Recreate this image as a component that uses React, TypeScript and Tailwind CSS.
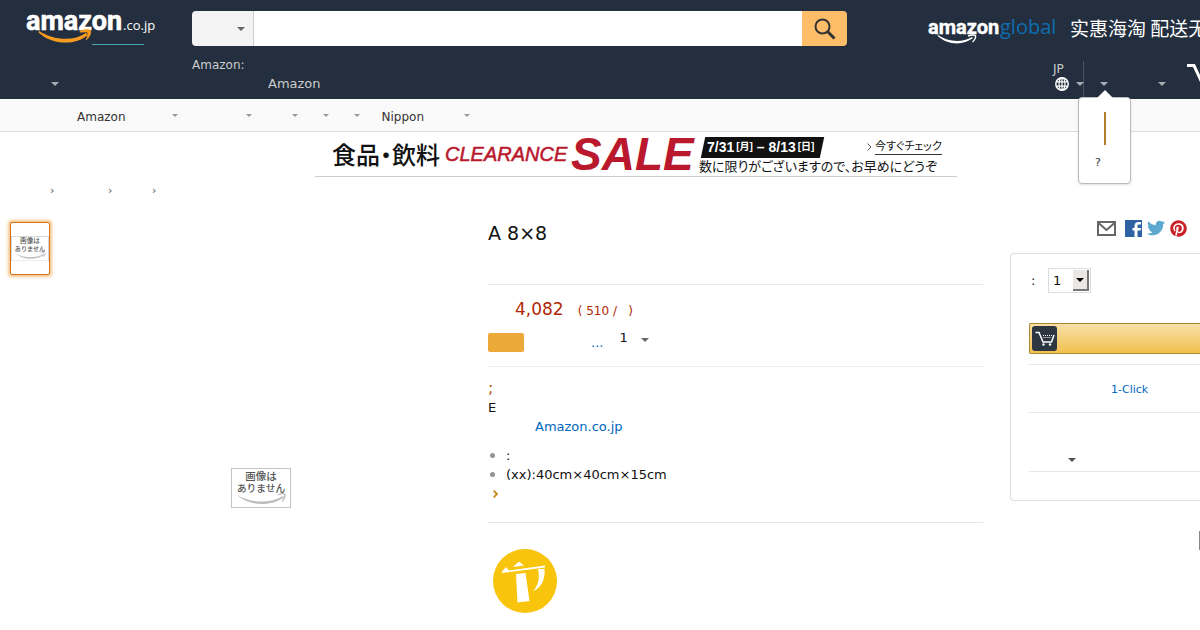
import { FaPinterest, FaTwitter } from 'react-icons/fa';
import { clsx } from 'clsx';

const Caret = ({ className, small }: { className?: string; small?: boolean }) => (
  <span
    className={clsx(
      'block h-0 w-0 shrink-0 border-x-transparent',
      small ? '-mt-[2px] border-x-3 border-t-3 border-t-[#999]' : 'border-x-4 border-t-4',
      className,
    )}
  />
);

const Logo = () => (
  <svg width="134" height="36" viewBox="0 0 134 36" role="img" aria-label="amazon.co.jp">
    <text x="0" y="20" fontSize="27" fontWeight="700" fill="#fff" stroke="#fff" strokeWidth="0.600" fontFamily="Roboto, sans-serif">
      amazon
    </text>
    <text x="97" y="20" fontSize="13" fill="#fff" fontFamily="'Open Sans', sans-serif">
      .co.jp
    </text>
    <path d="M13 21C27 30 47 32 60 23l2 2C49 36 26 35 12.500 22.500z" fill="#f79b20" />
    <path d="M54 21c4-1.700 9-2 10.500-.5 1 2-.8 7-4.300 9.500 1-3 2.300-6 1.500-7.300-1-.9-4.600-.7-7.500-.4z" fill="#f79b20" stroke="#f79b20" strokeWidth="0.600" />
    <path d="M66 34.500h52" stroke="#4aa3b5" />
  </svg>
);

const GlobalLogo = () => (
  <svg width="134" height="32" viewBox="0 0 134 32" className="shrink-0" role="img" aria-label="amazonglobal">
    <text x="0" y="22" fontSize="20" fontWeight="700" fill="#fff" stroke="#fff" strokeWidth="0.400" fontFamily="Roboto, sans-serif">
      amazon
    </text>
    <text x="72" y="22" fontSize="20" fill="#0e6db0" fontFamily="'Open Sans', sans-serif">
      global
    </text>
    <path d="M10 23c10 7 24 8 34 2l1 1C35 34 19 33 9.500 23.700z" fill="#fff" />
    <path d="M40 24c3-1 6-1.200 7.500-.5.5 2-.8 4.500-3 6.500" fill="none" stroke="#fff" strokeWidth="1.400" />
  </svg>
);

const GlobeIcon = () => (
  <svg width="14" height="14" viewBox="0 0 14 14" fill="none" stroke="#fff" strokeWidth="1.200">
    <circle cx="7" cy="7" r="6.200" strokeWidth="1.500" />
    <ellipse cx="7" cy="7" rx="3" ry="6.200" />
    <path d="M7 1v12M1.500 4.800h11M1.500 9.200h11" />
  </svg>
);

const NoImage = ({ className }: { className?: string }) => (
  <svg viewBox="0 0 60 40" className={className} role="img" aria-label="画像はありません">
    <rect x="0.5" y="0.5" width="59" height="39" fill="#fff" stroke="#c4c4c4" />
    <g fontWeight="500" fill="#555" textAnchor="middle" fontFamily="'Noto Sans CJK JP', sans-serif">
      <text x="30" y="11.500" fontSize="10.500">画像は</text>
      <text x="30" y="23.500" fontSize="9.700">ありません</text>
    </g>
    <path d="M6 27c13 8 33 9 46 1l1 1.500C39 39 18 38 6 27z" fill="#bbb" />
    <path d="M47 27c3-1.500 6-1.500 7-.7.3 2.500-1 5-3 7" fill="none" stroke="#bbb" strokeWidth="1.200" />
  </svg>
);

const Header = () => (
  <header className="h-[99px] bg-[#232f3e] text-[#ccc]">
    <div className="flex h-[57px] items-start">
      <a href="#" className="w-[192px] shrink-0 pl-[26px] pt-[10px]">
        <Logo />
      </a>
      <form className="mt-[11px] flex h-[35px] min-w-0 flex-1 overflow-hidden rounded">
        <div className="relative w-[62px] shrink-0 border-r border-[#cdcdcd] bg-[#f3f3f3]">
          <select aria-label="カテゴリー" className="h-full w-full appearance-none bg-transparent">
            <option></option>
          </select>
          <Caret className="pointer-events-none absolute right-2 top-4 border-t-[#666]" />
        </div>
        <input aria-label="検索" type="text" className="min-w-0 flex-1 bg-white px-2 text-[#111] outline-none" />
        <button type="button" aria-label="検索する" className="flex w-[45px] items-center justify-center bg-[#febd69]">
          <svg width="22" height="22" viewBox="0 0 22 22" fill="none" stroke="#333">
            <circle cx="8.500" cy="8.500" r="7" strokeWidth="2" />
            <path d="M13.500 13.500l7 7" strokeWidth="3" />
          </svg>
        </button>
      </form>
      <a href="#" className="flex w-[353px] shrink-0 items-center overflow-hidden pl-[81px] pt-3">
        <GlobalLogo />
        <span className="ml-2 whitespace-nowrap font-['Noto_Sans_CJK_SC',sans-serif] text-[19px] leading-7 text-white">
          实惠海淘 配送无
        </span>
      </a>
    </div>
    <div className="flex h-[42px]">
      <div className="w-[192px] shrink-0 pl-[51px] pt-[25px]">
        <Caret className="border-t-[#a7acb2]" />
      </div>
      <div className="flex-1">
        <p className="text-xs">Amazon:</p>
        <a href="#" className="ml-[76px] mt-px block text-[13px] leading-5">
          Amazon
        </a>
      </div>
      <div className="flex w-[353px] shrink-0 pl-[206px] pt-1">
        <a href="#" className="flex w-[31px] shrink-0 flex-col border-r border-[#4a5563] text-xs">
          JP
          <span className="flex items-center justify-between">
            <span className="ml-[2px]">
              <GlobeIcon />
            </span>
            <Caret className="-mr-px border-t-[#a7acb2]" />
          </span>
        </a>
        <div className="relative w-[42px] shrink-0 pl-4 pt-[21px]">
          <Caret className="border-t-[#a7acb2]" />
          <div className="absolute left-[-6px] top-9 z-10 h-[87px] w-[53px] rounded-sm border border-[#bbb] bg-white shadow-sm">
            <span className="absolute -top-2 left-[18px] border-x-8 border-b-8 border-x-transparent border-b-white" />
            <button type="button" aria-label="ログイン" className="mx-auto mt-[14px] block h-[33px] w-[2px] bg-[#b0812a]" />
            <p className="ml-4 mt-[10px] text-[11px] leading-4 text-[#333]">?</p>
          </div>
        </div>
        <Caret className="ml-[32px] mt-[21px] border-t-[#a7acb2]" />
        <svg width="40" height="30" viewBox="0 0 40 30" className="ml-[21px] mt-[2px] shrink-0" fill="none" stroke="#fff" strokeWidth="3">
          <path d="M0 2.500h7L16 22h18" />
        </svg>
      </div>
    </div>
  </header>
);

const Nav = () => (
  <nav className="flex h-[33px] items-center overflow-hidden border-b border-[#ddd] bg-[#fafafa] pl-[77px] pt-[3px] text-xs text-[#333]">
    <a href="#">Amazon</a>
    <Caret small className="ml-[46px]" />
    <Caret small className="ml-[68px]" />
    <Caret small className="ml-[40px]" />
    <Caret small className="ml-[25px]" />
    <Caret small className="ml-[25px]" />
    <a href="#" className="ml-[22px]">
      Nippon
    </a>
    <Caret small className="ml-[40px]" />
  </nav>
);

const SaleBanner = () => (
  <a
    href="#"
    className="ml-[315px] flex h-[45px] w-[642px] items-center whitespace-nowrap border-b border-[#ccc] pl-[17px] font-['Liberation_Sans','Noto_Sans_CJK_JP',sans-serif] text-[#111]"
  >
    <span className="w-[113px] font-['Noto_Sans_CJK_JP',sans-serif] text-2xl font-medium [font-feature-settings:'palt']">
      食品・飲料
    </span>
    <span className="w-[126px] text-xl italic text-[#b9182d] [-webkit-text-stroke:0.5px_#b9182d]">CLEARANCE</span>
    <span className="w-[128px] text-[46px] font-bold italic leading-[45px] text-[#b9182d]">SALE</span>
    <span className="flex flex-1 flex-col pt-1">
      <span className="flex items-center">
        <span className="relative z-0 ml-1 flex h-[21px] w-[119px] items-center whitespace-pre pl-1 text-sm font-bold text-white before:absolute before:inset-0 before:-z-10 before:-skew-x-12 before:bg-[#111]">
          7/31<span className="ml-[2px] text-[10px]">[月]</span> – 8/13<span className="ml-[2px] text-[10px]">[日]</span>
        </span>
        <svg width="5" height="8" viewBox="0 0 5 8" className="ml-[45px] mr-[3px]" fill="none" stroke="#555">
          <path d="M0.500 0.500L4 4 0.500 7.500" />
        </svg>
        <span className="border-b border-[#333] text-[11px] leading-[15px] [font-feature-settings:'palt']">
          今すぐチェック
        </span>
      </span>
      <span className="text-[13px] leading-[18px] [font-feature-settings:'palt']">
        数に限りがございますので、お早めにどうぞ
      </span>
    </span>
  </a>
);

const Breadcrumbs = () => (
  <div className="flex h-[26px] items-center pl-[50px] pt-[2px] text-[11px] text-[#555]">
    <span className="w-[58px]">›</span>
    <span className="w-[44px]">›</span>
    <span>›</span>
  </div>
);

const Gallery = () => (
  <section className="w-[488px] shrink-0 pl-[10px] pt-[19px]">
    <button
      type="button"
      aria-label="画像"
      className="flex h-[53px] w-[40px] items-center rounded-xs border border-[#d0761c] bg-white shadow-[0_0_3px_2px_#f8c58c]"
    >
      <NoImage className="w-full" />
    </button>
    <NoImage className="ml-[221px] mt-[193px] block h-10 w-[60px]" />
  </section>
);

const Product = () => (
  <section className="min-w-0 flex-1 pt-[18px] text-[13px] leading-[19px] text-[#111]">
    <h1 className="text-[19px] leading-6">A 8×8</h1>
    <hr className="mt-[39px] border-[#e7e7e7]" />
    <p className="mt-3 flex items-baseline pl-[27px] leading-6 text-[#b12704]">
      <span className="text-[17px]">4,082</span>
      <span className="ml-[14px] whitespace-pre text-xs">( 510 /&nbsp;&nbsp; )</span>
    </p>
    <div className="mt-[7px] flex h-[34px] items-start">
      <span className="mt-[5px] h-[19px] w-9 rounded-xs bg-[#eda83a]" />
      <a href="#" className="ml-[67px] mt-[5px] text-[#0066c0]">
        ...
      </a>
      <div className="relative ml-3">
        <select aria-label="数量" className="w-[46px] appearance-none bg-transparent pl-1">
          <option>1</option>
        </select>
        <Caret className="pointer-events-none absolute right-3 top-[10px] border-t-[#666]" />
      </div>
    </div>
    <hr className="mt-[4px] border-dotted border-[#ddd]" />
    <p className="mt-[11px] text-base leading-[19px] text-[#b25a10]">;</p>
    <p className="mt-px">E</p>
    <p className="pl-[47px]">
      <a href="#" className="text-[#0066c0]">
        Amazon.co.jp
      </a>
    </p>
    <ul className="mt-[10px]">
      {[':', '(xx):40cm×40cm×15cm'].map((text) => (
        <li key={text} className="flex items-center">
          <span className="ml-[2px] mr-[11px] h-[5px] w-[5px] rounded-full bg-[#949494]" />
          {text}
        </li>
      ))}
    </ul>
    <a href="#" aria-label="もっと見る" className="flex h-[19px] items-center pl-[5px]">
      <svg width="5" height="8" viewBox="0 0 5 8" fill="none" stroke="#c7861c" strokeWidth="1.800">
        <path d="M0.700 0.700L4 4 0.700 7.300" />
      </svg>
    </a>
    <hr className="mt-[19px] border-[#e7e7e7]" />
    <svg width="64" height="64" viewBox="0 0 64 64" className="ml-[5px] mt-[26px]">
      <circle cx="32" cy="32" r="32" fill="#f9c40c" />
      <g fill="#fff">
        <path d="M9 22.500l4-4.500 3 3.500 36-5v2L9 24z" />
        <path d="M20 18l6-5.500 5 4z" />
        <path d="M23 25l9.500-1L36.500 52l-12 1.500z" />
        <path d="M45 20h6.500c1 10-3 18.500-11.500 22.500C45.500 36 47 29 45 20z" />
      </g>
    </svg>
  </section>
);

const BuyBox = () => (
  <aside className="ml-[27px] w-[190px] shrink-0 overflow-hidden pt-[16px]">
    <div className="flex h-[18px] items-center pl-[87px]">
      <svg width="19" height="15" viewBox="0 0 19 15" fill="none" stroke="#666" strokeWidth="2">
        <rect x="1" y="1" width="17" height="13" />
        <path d="M1.500 2l8 7 8-7" />
      </svg>
      <svg width="17" height="17" viewBox="0 0 17 17" className="ml-[9px]">
        <rect width="17" height="17" fill="#2f62a3" />
        <path d="M9.500 17v-6.500h-2V8h2V6c0-2.500 1.500-4 3.800-4H16v2.500h-2c-1.200 0-1.500.5-1.500 1.500v2H16l-.4 2.500h-3.100V17z" fill="#fff" />
      </svg>
      <FaTwitter size={18} className="ml-[5px] text-[#5ca8ce]" />
      <FaPinterest size={17} className="ml-[5px] text-[#cb2027]" />
    </div>
    <div className="mt-[16px] h-[248px] rounded-l border border-r-0 border-[#ddd] pl-[18px] text-[13px] text-[#111]">
      <div className="flex items-center pt-[14px]">
        <label htmlFor="quantity" className="w-[19px] pl-[2px]">
          :
        </label>
        <div className="relative">
          <select
            id="quantity"
            className="block h-[25px] w-[43px] appearance-none border border-[#ddd] bg-white pl-1"
          >
            <option>1</option>
          </select>
          <span className="pointer-events-none absolute right-[2px] top-[2px] flex h-[21px] w-4 items-center justify-center border-b-2 border-r-2 border-[#777] bg-[#ebe7e4]">
            <Caret className="border-t-black" />
          </span>
        </div>
      </div>
      <button
        type="button"
        aria-label="カートに入れる"
        className="mt-[30px] flex h-[31px] w-full items-center rounded-l-xs border border-r-0 border-[#a88734] bg-linear-to-b from-[#f7dfa5] to-[#f0c14b] pl-[2px]"
      >
        <svg width="25" height="25" viewBox="0 0 25 25">
          <rect width="25" height="25" rx="3" fill="#2d3741" />
          <path d="M3.500 6.500h3.500l4 9.500h8.500l2.500-7" fill="none" stroke="#fff" strokeWidth="1.500" />
          <path d="M11 9.500h9M11.500 11.500h8" stroke="#fff" strokeDasharray="1 1" />
          <circle cx="11.500" cy="18.500" r="1.200" fill="#fff" />
          <circle cx="18" cy="18.500" r="1.200" fill="#fff" />
        </svg>
      </button>
      <div className="mt-[10px] h-[49px] border-y border-[#e7e7e7] pl-[82px] pt-[17px] text-[11px] leading-4">
        <a href="#" className="block text-[#0066c0]">
          1-Click
        </a>
      </div>
      <div className="h-[59px] border-b border-[#e7e7e7] pl-[39px] pt-[45px]">
        <Caret className="border-t-[#555]" />
      </div>
    </div>
    <div className="ml-auto mt-[30px] h-[19px] w-px bg-[#888]" />
  </aside>
);

const App = () => {
  return (
    <div className="min-h-screen overflow-hidden bg-white font-['DejaVu_Sans','Noto_Sans_CJK_JP',sans-serif]">
      <Header />
      <Nav />
      <SaleBanner />
      <Breadcrumbs />
      <main className="flex">
        <Gallery />
        <Product />
        <BuyBox />
      </main>
    </div>
  );
};

export default App;
